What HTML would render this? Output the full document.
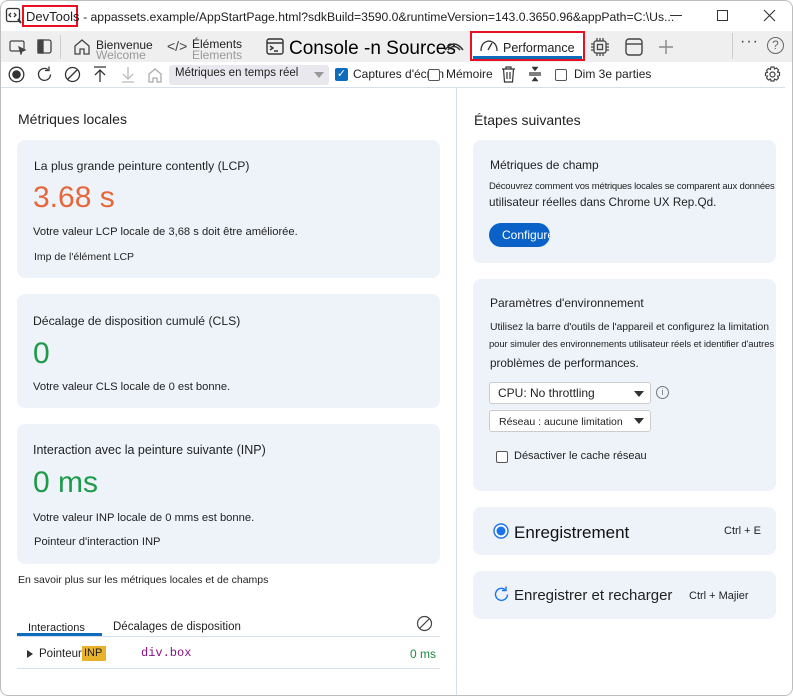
<!DOCTYPE html>
<html><head><meta charset="utf-8"><style>
*{box-sizing:border-box;margin:0;padding:0}
body{width:793px;height:696px;overflow:hidden;background:#fff;font-family:"Liberation Sans",sans-serif;color:#1f1f1f;position:relative}
.a{position:absolute;white-space:nowrap}
.card{position:absolute;background:#eef3fa;border-radius:8px}
svg{position:absolute}
</style></head><body>
<div class="a" style="left:0;top:0;width:793px;height:696px;border:1px solid #bdbdbd;border-radius:8px"></div>
<!-- title bar -->
<svg style="left:5px;top:7px" width="18" height="18" viewBox="0 0 18 18" fill="none" stroke="#333" stroke-width="1.3"><rect x="1.5" y="1.5" width="13" height="13" rx="2"/><path d="M6 6L4 8l2 2M9 6l2 2-2 2"/><path d="M13 12l3 4" stroke-width="2"/></svg>
<div class="a" style="left:22px;top:5px;width:56px;height:22px;border:2px solid #e81123"></div>
<div class="a" style="left:26px;top:9px;font-size:13px;color:#1f1f1f">DevTools <span style="font-size:12.2px">- appassets.example/AppStartPage.html?sdkBuild=3590.0&amp;runtimeVersion=143.0.3650.96&amp;appPath=C:\Us...</span></div>
<div class="a" style="left:670px;top:15px;width:12px;height:1px;background:#333"></div>
<div class="a" style="left:717px;top:10px;width:11px;height:11px;border:1px solid #333"></div>
<svg style="left:763px;top:9px" width="13" height="13" viewBox="0 0 13 13" stroke="#333" stroke-width="1.1"><path d="M1 1l11 11M12 1L1 12"/></svg>
<!-- tab bar -->
<div class="a" style="left:1px;top:31px;width:791px;height:31px;background:#efefef"></div>
<svg style="left:9px;top:39px" width="18" height="16" viewBox="0 0 18 16" fill="none" stroke="#444" stroke-width="1.2"><rect x="1" y="2" width="14" height="10" rx="1.5"/><path d="M10 8l6 3-3 1-1 3z" fill="#444"/></svg>
<svg style="left:37px;top:39px" width="15" height="15" viewBox="0 0 15 15" fill="none" stroke="#444" stroke-width="1.3"><rect x="1" y="1" width="13" height="13" rx="2"/><rect x="1" y="1" width="5" height="13" fill="#444"/></svg>
<div class="a" style="left:60px;top:35px;width:1px;height:24px;background:#ccc"></div>
<svg style="left:73px;top:38px" width="18" height="18" viewBox="0 0 18 18" fill="none" stroke="#444" stroke-width="1.3"><path d="M2 8L9 2l7 6v8h-5v-5H7v5H2z"/></svg>
<div class="a" style="left:96px;top:48px;font-size:12px;color:#999">Welcome</div>
<div class="a" style="left:96px;top:38px;font-size:12px;color:#222">Bienvenue</div>
<div class="a" style="left:167px;top:38px;font-size:14px;color:#444">&lt;/&gt;</div>
<div class="a" style="left:192px;top:48px;font-size:12px;color:#999">Elements</div>
<div class="a" style="left:192px;top:37px;font-size:12px;color:#222">Éléments</div>
<svg style="left:266px;top:38px" width="18" height="17" viewBox="0 0 18 17" fill="none" stroke="#333" stroke-width="1.4"><rect x="1" y="1" width="16" height="15" rx="2"/><path d="M1 5h16M4 8l3 2-3 2M8 13h4"/></svg>
<div class="a" style="left:289px;top:38px;font-size:19px;color:#000">Console -n Sources</div>
<svg style="left:443px;top:40px" width="22" height="16" viewBox="0 0 22 16" fill="none" stroke="#333" stroke-width="1.5"><path d="M2 10Q11 -2 20 10"/><path d="M5 10Q11 3 17 10"/></svg>
<div class="a" style="left:470px;top:31px;width:115px;height:30px;border:2px solid #e81123;background:#fff"></div>
<div class="a" style="left:473px;top:56px;width:109px;height:3px;background:#0f6cbd"></div>
<svg style="left:479px;top:39px" width="20" height="14" viewBox="0 0 20 14" fill="none" stroke="#333" stroke-width="1.3"><path d="M2 12Q2 3 10 2q8 1 8 10"/><path d="M9 11l4-7"/></svg>
<div class="a" style="left:503px;top:41px;font-size:12.5px;color:#1f1f1f">Performance</div>
<svg style="left:590px;top:37px" width="20" height="20" viewBox="0 0 20 20" fill="none" stroke="#444" stroke-width="1.3"><rect x="4" y="4" width="12" height="12" rx="2"/><rect x="7.5" y="7.5" width="5" height="5"/><path d="M7 1v3M10 1v3M13 1v3M7 16v3M10 16v3M13 16v3M1 7h3M1 10h3M1 13h3M16 7h3M16 10h3M16 13h3"/></svg>
<svg style="left:625px;top:38px" width="18" height="18" viewBox="0 0 18 18" fill="none" stroke="#444" stroke-width="1.4"><rect x="1" y="1" width="16" height="16" rx="3"/><path d="M1 6h16"/></svg>
<svg style="left:658px;top:39px" width="16" height="16" viewBox="0 0 16 16" stroke="#888" stroke-width="1.4"><path d="M8 1v14M1 8h14"/></svg>
<div class="a" style="left:732px;top:33px;width:1px;height:26px;background:#ccc"></div>
<div class="a" style="left:740px;top:33px;font-size:16px;color:#444;letter-spacing:1px">···</div>
<div class="a" style="left:767px;top:37px;width:17px;height:17px;border:1.3px solid #666;border-radius:50%;font-size:12px;color:#666;text-align:center;line-height:15px">?</div>
<!-- toolbar -->
<svg style="left:8px;top:66px" width="17" height="17" viewBox="0 0 17 17"><circle cx="8.5" cy="8.5" r="7.3" fill="none" stroke="#333" stroke-width="1.3"/><circle cx="8.5" cy="8.5" r="4.3" fill="#333"/></svg>
<svg style="left:36px;top:66px" width="17" height="17" viewBox="0 0 17 17" fill="none" stroke="#333" stroke-width="1.3"><path d="M14.5 8.5A6 6 0 1 1 12 3.5"/><path d="M9 4.5h4v-4"/></svg>
<svg style="left:64px;top:66px" width="17" height="17" viewBox="0 0 17 17" fill="none" stroke="#333" stroke-width="1.3"><circle cx="8.5" cy="8.5" r="7"/><path d="M3.5 13.5l10-10"/></svg>
<svg style="left:93px;top:66px" width="14" height="17" viewBox="0 0 14 17" fill="none" stroke="#333" stroke-width="1.3"><path d="M1 1h12M7 4v12M2 9l5-5 5 5"/></svg>
<svg style="left:121px;top:66px" width="14" height="17" viewBox="0 0 14 17" fill="none" stroke="#bbb" stroke-width="1.3"><path d="M1 16h12M7 1v12M2 8l5 5 5-5"/></svg>
<svg style="left:147px;top:67px" width="16" height="16" viewBox="0 0 16 16" fill="none" stroke="#aaa" stroke-width="1.3"><path d="M2 7l6-5 6 5v8h-4v-4H6v4H2z"/></svg>
<div class="a" style="left:169px;top:65px;width:160px;height:20px;background:#e8e8ee;border-radius:3px"></div>
<div class="a" style="left:175px;top:67px;font-size:11.5px;color:#222">Métriques en temps réel</div>
<div class="a" style="left:314px;top:72px;border-left:5px solid transparent;border-right:5px solid transparent;border-top:6px solid #999"></div>
<div class="a" style="left:335px;top:68px;width:13px;height:13px;background:#0f6cbd;border-radius:2px;color:#fff;font-size:11px;line-height:13px;text-align:center">✓</div>
<div class="a" style="left:353px;top:67px;font-size:12px">Captures d'écran</div>
<div class="a" style="left:428px;top:69px;width:12px;height:12px;border:1px solid #555;border-radius:2px;background:#fff"></div>
<div class="a" style="left:446px;top:67px;font-size:12px">Mémoire</div>
<svg style="left:501px;top:66px" width="15" height="17" viewBox="0 0 15 17" fill="none" stroke="#333" stroke-width="1.2"><path d="M1 3h13M5 3V1h5v2M2.5 3l1 13h8l1-13M6 6v7M9 6v7"/></svg>
<svg style="left:528px;top:65px" width="14" height="18" viewBox="0 0 14 18" fill="#333" stroke="#333" stroke-width="1.3"><path d="M1 8h12M1 10h12"/><path d="M4 2l3 4 3-4zM4 16l3-4 3 4z" stroke-width="0.5"/></svg>
<div class="a" style="left:555px;top:69px;width:12px;height:12px;border:1px solid #555;border-radius:2px"></div>
<div class="a" style="left:574px;top:67px;font-size:12px">Dim 3e parties</div>
<svg style="left:764px;top:66px" width="17" height="17" viewBox="0 0 17 17" fill="none" stroke="#444" stroke-width="1.2"><circle cx="8.5" cy="8.5" r="2.5"/><path d="M7 1h3l.5 2 2-1 2 2-1 2 2 .5v3l-2 .5 1 2-2 2-2-1-.5 2H7l-.5-2-2 1-2-2 1-2-2-.5V7l2-.5-1-2 2-2 2 1z"/></svg>
<div class="a" style="left:1px;top:87px;width:784px;height:1px;background:#d6e0ec"></div>
<div class="a" style="left:456px;top:88px;width:1px;height:607px;background:#d6e0ec"></div>
<!-- left -->
<div class="a" style="left:18px;top:111px;font-size:14px">Métriques locales</div>
<div class="card" style="left:17px;top:140px;width:423px;height:138px"></div>
<div class="a" style="left:34px;top:159px;font-size:12.2px">La plus grande peinture contently (LCP)</div>
<div class="a" style="left:33px;top:181px;font-size:30px;color:#e5673b">3.68 s</div>
<div class="a" style="left:33px;top:226px;font-size:11.2px">Votre valeur LCP locale de 3,68 s doit être améliorée.</div>
<div class="a" style="left:34px;top:251px;font-size:10.5px">Imp de l'élément LCP</div>
<div class="card" style="left:17px;top:294px;width:423px;height:114px"></div>
<div class="a" style="left:33px;top:314px;font-size:12.2px">Décalage de disposition cumulé (CLS)</div>
<div class="a" style="left:33px;top:337px;font-size:30px;color:#1e9a4b">0</div>
<div class="a" style="left:33px;top:381px;font-size:11.2px">Votre valeur CLS locale de 0 est bonne.</div>
<div class="card" style="left:17px;top:424px;width:423px;height:140px"></div>
<div class="a" style="left:33px;top:443px;font-size:12.5px">Interaction avec la peinture suivante (INP)</div>
<div class="a" style="left:33px;top:466px;font-size:30px;color:#1e9a4b">0 ms</div>
<div class="a" style="left:33px;top:512px;font-size:11.2px">Votre valeur INP locale de 0 mms est bonne.</div>
<div class="a" style="left:34px;top:536px;font-size:11.2px">Pointeur d'interaction INP</div>
<div class="a" style="left:18px;top:574px;font-size:10.5px">En savoir plus sur les métriques locales et de champs</div>
<div class="a" style="left:28px;top:622px;font-size:11px">Interactions</div>
<div class="a" style="left:17px;top:633px;width:85px;height:3px;background:#0f6cbd"></div>
<div class="a" style="left:113px;top:621px;font-size:11.5px">Décalages de disposition</div>
<svg style="left:416px;top:615px" width="17" height="17" viewBox="0 0 17 17" fill="none" stroke="#444" stroke-width="1.2"><circle cx="8.5" cy="8.5" r="7"/><path d="M3.5 13.5l10-10"/></svg>
<div class="a" style="left:17px;top:636px;width:423px;height:1px;background:#d6e0ec"></div>
<div class="a" style="left:27px;top:650px;border-top:4px solid transparent;border-bottom:4px solid transparent;border-left:6px solid #333"></div>
<div class="a" style="left:39px;top:648px;font-size:11.5px">Pointeur</div>
<div class="a" style="left:82px;top:646px;width:24px;height:15px;background:#e8b32a;font-size:11px;line-height:15px;padding-left:2px">INP</div>
<div class="a" style="left:141px;top:646px;font-size:12px;font-family:'Liberation Mono',monospace;color:#881280">div.box</div>
<div class="a" style="left:410px;top:647px;font-size:12px;color:#1e8a44">0 ms</div>
<div class="a" style="left:17px;top:668px;width:423px;height:1px;background:#d6e0ec"></div>
<!-- right -->
<div class="a" style="left:474px;top:112px;font-size:14px">Étapes suivantes</div>
<div class="card" style="left:473px;top:140px;width:303px;height:123px"></div>
<div class="a" style="left:490px;top:158px;font-size:12px">Métriques de champ</div>
<div class="a" style="left:489px;top:181px;font-size:9.5px;letter-spacing:-0.2px">Découvrez comment vos métriques locales se comparent aux données</div>
<div class="a" style="left:489px;top:196px;font-size:11.7px">utilisateur réelles dans Chrome UX Rep.Qd.</div>
<div class="a" style="left:489px;top:223px;width:61px;height:24px;background:#0a62c9;border-radius:12px;color:#fff;font-size:12px;line-height:24px;padding-left:13px;overflow:hidden">Configure</div>
<div class="card" style="left:473px;top:279px;width:303px;height:212px"></div>
<div class="a" style="left:490px;top:296px;font-size:12px">Paramètres d'environnement</div>
<div class="a" style="left:490px;top:322px;font-size:10.4px;letter-spacing:-0.05px">Utilisez la barre d'outils de l'appareil et configurez la limitation</div>
<div class="a" style="left:489px;top:339px;font-size:9.5px;letter-spacing:-0.1px">pour simuler des environnements utilisateur réels et identifier d'autres</div>
<div class="a" style="left:490px;top:357px;font-size:11.7px">problèmes de performances.</div>
<div class="a" style="left:489px;top:382px;width:162px;height:22px;background:#fff;border:1px solid #ccc;border-radius:3px"></div>
<div class="a" style="left:498px;top:386px;font-size:12px">CPU: No throttling</div>
<div class="a" style="left:634px;top:391px;border-left:5px solid transparent;border-right:5px solid transparent;border-top:6px solid #333"></div>
<div class="a" style="left:656px;top:386px;width:13px;height:13px;border:1px solid #777;border-radius:50%;font-size:9px;line-height:11px;text-align:center;color:#777">i</div>
<div class="a" style="left:489px;top:410px;width:162px;height:22px;background:#fff;border:1px solid #ccc;border-radius:3px"></div>
<div class="a" style="left:499px;top:416px;font-size:10.5px">Réseau : aucune limitation</div>
<div class="a" style="left:634px;top:418px;border-left:5px solid transparent;border-right:5px solid transparent;border-top:6px solid #333"></div>
<div class="a" style="left:496px;top:451px;width:12px;height:12px;border:1px solid #555;border-radius:2px;background:#fff"></div>
<div class="a" style="left:514px;top:450px;font-size:11px">Désactiver le cache réseau</div>
<div class="card" style="left:473px;top:507px;width:303px;height:48px"></div>
<svg style="left:493px;top:523px" width="16" height="16" viewBox="0 0 16 16"><circle cx="8" cy="8" r="7" fill="#fff" stroke="#1a73e8" stroke-width="1.4"/><circle cx="8" cy="8" r="4.5" fill="#1a73e8"/></svg>
<div class="a" style="left:514px;top:523px;font-size:17px;color:#111">Enregistrement</div>
<div class="a" style="left:724px;top:525px;font-size:11px">Ctrl + E</div>
<div class="card" style="left:473px;top:571px;width:303px;height:48px"></div>
<svg style="left:493px;top:586px" width="17" height="17" viewBox="0 0 17 17" fill="none" stroke="#1a73e8" stroke-width="1.4"><path d="M14.5 8.5A6 6 0 1 1 12 3.5"/><path d="M9 4.5h4v-4"/></svg>
<div class="a" style="left:514px;top:587px;font-size:15px">Enregistrer et recharger</div>
<div class="a" style="left:689px;top:590px;font-size:11px">Ctrl + Majier</div>
</body></html>
